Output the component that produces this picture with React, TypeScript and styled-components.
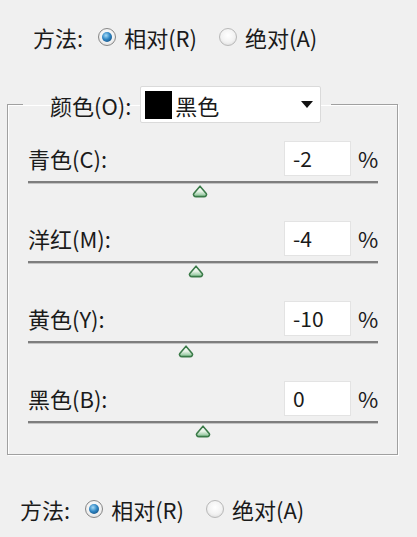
import React from 'react';
import styled, { createGlobalStyle } from 'styled-components';

const GlobalStyle = createGlobalStyle`
  html, body {
    margin: 0;
    padding: 0;
    background: #f0f0f0;
  }
  body {
    font-family: "Noto Sans CJK SC", "Noto Sans", sans-serif;
    color: #1a1a1a;
  }
`;

const S = {
  Page: styled.div`
    width: 417px;
    height: 537px;
    box-sizing: border-box;
    padding-top: 22px;
    display: flex;
    flex-direction: column;
    overflow: hidden;
  `,

  MethodRow: styled.div<{ $indent: number }>`
    display: flex;
    align-items: center;
    height: 30px;
    padding-left: ${(p) => p.$indent}px;
    font-size: 22px;
    line-height: 30px;
  `,

  MethodLabel: styled.span`
    margin-right: 15px;
  `,

  Option: styled.label`
    display: flex;
    align-items: center;
    gap: 8px;
    margin-right: 22px;
  `,

  Radio: styled.span<{ $checked?: boolean }>`
    position: relative;
    width: 18px;
    height: 18px;
    box-sizing: border-box;
    border-radius: 50%;
    border: 1px solid ${(p) => (p.$checked ? '#878787' : '#b8b8b8')};
    background: radial-gradient(circle at 50% 40%, #ffffff 0%, #f2f2f2 55%, #d3d3d3 100%);

    ${(p) =>
      p.$checked &&
      `
      &::after {
        content: '';
        position: absolute;
        left: 3px;
        top: 3px;
        width: 10px;
        height: 10px;
        border-radius: 50%;
        background: radial-gradient(circle at 40% 35%, #a6dbf7 0%, #2f86c4 45%, #0b3a66 100%);
      }
    `}
  `,

  Group: styled.fieldset`
    margin: 0 19px 0 7px;
    padding: 0 19px 16px 20px;
    border: 1px solid #a0a0a0;
    box-shadow: inset 1px 1px 0 #ffffff, 1px 1px 0 #ffffff;
    min-width: 0;
  `,

  Legend: styled.legend`
    display: flex;
    align-items: center;
    gap: 9px;
    margin-left: -5px;
    padding: 0 10px 0 27px;
    font-size: 22px;
  `,

  Select: styled.div`
    display: flex;
    align-items: center;
    width: 181px;
    height: 37px;
    box-sizing: border-box;
    padding: 0 7px 0 4px;
    background: #ffffff;
    border: 1px solid #dadada;
    border-radius: 2px;
  `,

  Swatch: styled.span<{ $color: string }>`
    width: 27px;
    height: 28px;
    background: ${(p) => p.$color};
    margin-right: 3px;
  `,

  SelectText: styled.span`
    flex: 1;
    font-size: 22px;
  `,

  Caret: styled.span`
    width: 0;
    height: 0;
    border-left: 6px solid transparent;
    border-right: 6px solid transparent;
    border-top: 7px solid #111;
  `,

  Channels: styled.div`
    display: flex;
    flex-direction: column;
    gap: 22px;
    margin-top: 17px;
  `,

  Channel: styled.div`
    display: flex;
    flex-direction: column;
  `,

  Head: styled.div`
    display: flex;
    align-items: center;
    height: 36px;
    font-size: 22px;
  `,

  Label: styled.span`
    flex: 1;
  `,

  Value: styled.div`
    width: 67px;
    height: 35px;
    box-sizing: border-box;
    padding-left: 8px;
    background: #ffffff;
    border: 1px solid #e3e3e3;
    line-height: 33px;
    font-size: 21px;
  `,

  Unit: styled.span`
    width: 20px;
    margin-left: 7px;
    text-align: right;
  `,

  Track: styled.div`
    height: 2px;
    margin-top: 5px;
    background: #7e7e7e;
    border-bottom: 1px solid #c4c4c4;
  `,

  ThumbZone: styled.div`
    position: relative;
    height: 14px;
  `,

  Thumb: styled.svg`
    position: absolute;
    top: 1px;
    transform: translateX(-50%);
  `,
};

const Thumb: React.FC<{ value: number }> = ({ value }) => (
  <S.Thumb width="16" height="13" viewBox="0 0 16 13" style={{ left: `${((value + 100) / 200) * 100}%` }}>
    <defs>
      <linearGradient id="thumbFill" x1="0" y1="0" x2="0" y2="1">
        <stop offset="0" stopColor="#ffffff" />
        <stop offset="0.5" stopColor="#e6f2e6" />
        <stop offset="1" stopColor="#7fbd8c" />
      </linearGradient>
    </defs>
    <path
      d="M8 1.2 L14.2 8.4 Q15 9.5 14.1 10.7 Q13.4 11.6 12 11.6 H4 Q2.6 11.6 1.9 10.7 Q1 9.5 1.8 8.4 Z"
      fill="url(#thumbFill)"
      stroke="#3a7a48"
      strokeWidth="1.6"
      strokeLinejoin="round"
    />
  </S.Thumb>
);

const Method: React.FC<{ indent: number }> = ({ indent }) => (
  <S.MethodRow $indent={indent}>
    <S.MethodLabel>方法:</S.MethodLabel>
    <S.Option>
      <S.Radio $checked />
      相对(R)
    </S.Option>
    <S.Option>
      <S.Radio />
      绝对(A)
    </S.Option>
  </S.MethodRow>
);

const channels = [
  { label: '青色(C):', value: -2 },
  { label: '洋红(M):', value: -4 },
  { label: '黄色(Y):', value: -10 },
  { label: '黑色(B):', value: 0 },
];

const App: React.FC = () => {
  return (
    <>
      <GlobalStyle />
      <S.Page>
        <Method indent={33} />
        <div style={{ height: 34 }} />
        <S.Group>
          <S.Legend>
            颜色(O):
            <S.Select>
              <S.Swatch $color="#000000" />
              <S.SelectText>黑色</S.SelectText>
              <S.Caret />
            </S.Select>
          </S.Legend>
          <S.Channels>
            {channels.map((c) => (
              <S.Channel key={c.label}>
                <S.Head>
                  <S.Label>{c.label}</S.Label>
                  <S.Value>{c.value}</S.Value>
                  <S.Unit>%</S.Unit>
                </S.Head>
                <S.Track />
                <S.ThumbZone>
                  <Thumb value={c.value} />
                </S.ThumbZone>
              </S.Channel>
            ))}
          </S.Channels>
        </S.Group>
        <div style={{ height: 39 }} />
        <Method indent={20} />
      </S.Page>
    </>
  );
};

export default App;
